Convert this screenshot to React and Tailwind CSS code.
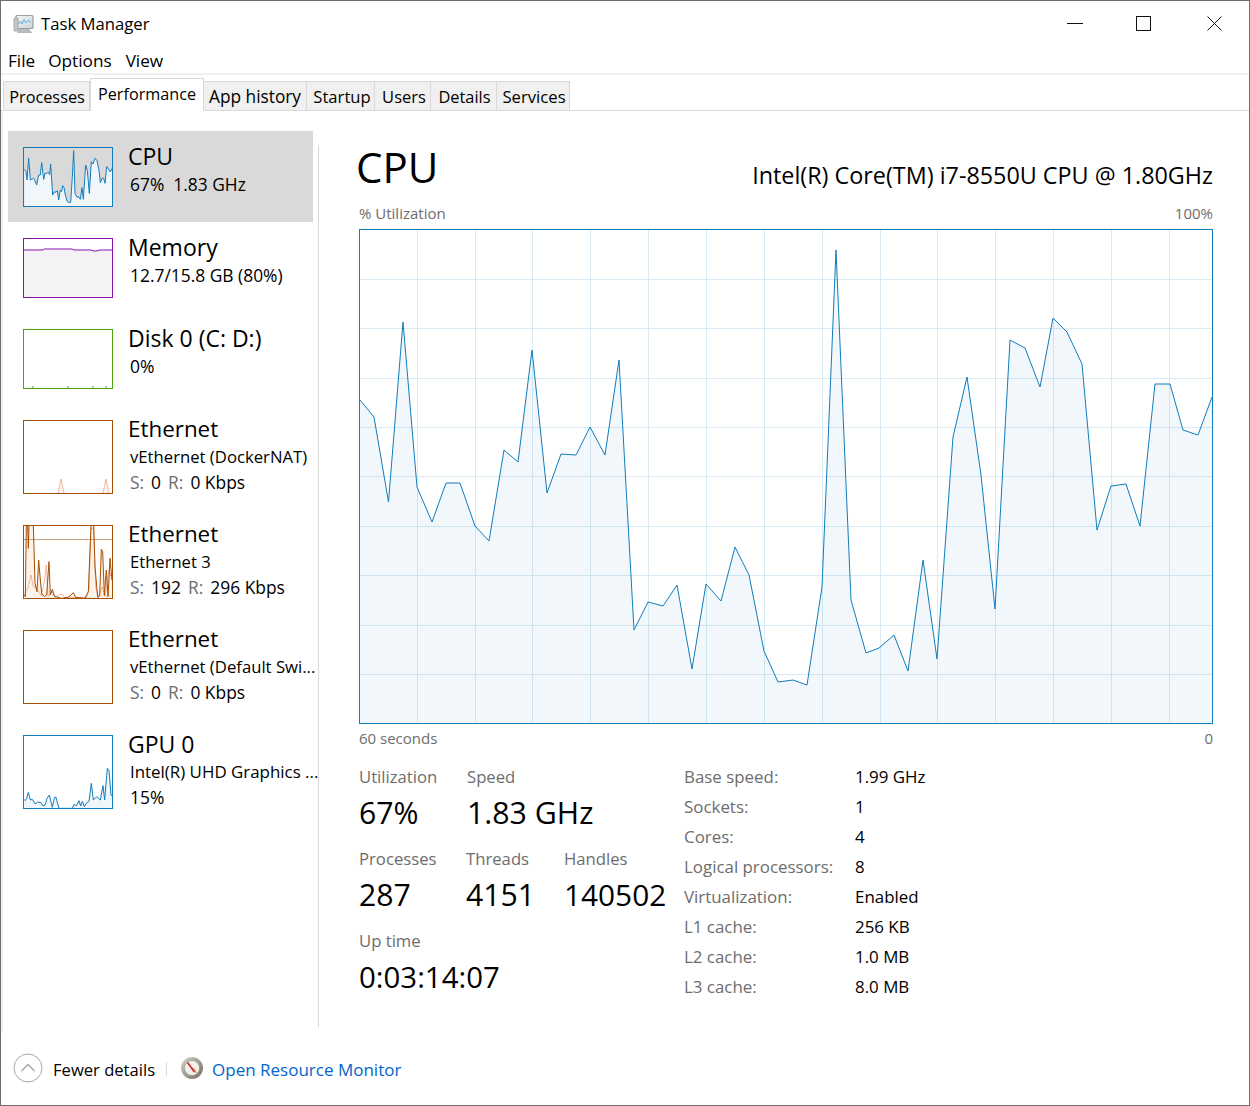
import React from "react";

const cpuPts = [[360,400],[374,417],[388.5,502],[403,322],[417,487],[432,522],[446,483],[460,483],[475,526],[489,541],[504,450],[518,462],[532,350],[547,493],[561,454],[576,455],[590,427],[605,455],[619,360],[634,630],[648,602],[663,606],[677,585],[692,669],[706,584],[721,601],[735,547],[749,575],[764,651],[778,682],[793,680],[807,685],[822,587],[836,250],[851,600],[866,653],[879,648],[894,635],[908,671],[923,560],[937,659],[953,437],[967,377],[981,475],[995,609],[1010,340],[1025,348],[1040,387],[1053,318],[1067,332],[1082,364],[1097,530],[1111,486],[1126,484],[1140,526],[1155,384],[1170,384],[1183,430],[1198,435],[1212,397]];
const hLines = [279,328,378,427,476,526,575,625,674];
const vLines = [417,475,532,590,648,706,764,822,880,937,995,1053,1111,1169];

const cpuMini = [[28,88],[33,95],[36,120],[41,55],[46,120],[55,115],[58,118],[65,135],[71,105],[76,105],[80,68],[86,118],[90,100],[96,100],[100,96],[104,104],[107,72],[113,165],[118,155],[123,157],[127,152],[131,180],[136,150],[140,155],[143,137],[147,143],[151,165],[156,183],[161,187],[167,187],[172,110],[176,32],[180,160],[186,172],[191,170],[196,178],[201,143],[205,178],[212,75],[217,92],[223,160],[229,65],[234,72],[240,55],[246,62],[252,92],[256,128],[261,115],[266,115],[270,130],[275,80],[281,88],[286,96],[291,85]];
const ethSolid = [[27,225],[31,230],[34,15],[38,15],[40,85],[42,15],[55,15],[60,190],[66,215],[71,120],[76,180],[80,220],[88,230],[95,225],[102,125],[106,225],[112,208],[118,228],[128,232],[140,235],[158,232],[165,228],[175,218],[182,232],[210,235],[220,215],[228,15],[236,15],[240,140],[248,232],[254,228],[259,88],[263,95],[268,225],[274,150],[279,230],[285,115],[291,180]];
const ethDot = [[27,225],[40,200],[48,165],[55,200],[65,205],[80,228],[90,170],[94,135],[99,230],[110,215],[120,232],[130,228],[140,220],[148,232],[215,232],[222,205],[228,30],[236,20],[242,200],[250,232],[262,200],[270,230],[282,150],[291,180]];
const gpuMini = [[27,208],[31,212],[35,205],[40,187],[46,210],[52,208],[60,222],[68,216],[78,218],[84,228],[90,225],[96,205],[103,195],[112,232],[118,204],[122,200],[132,235],[172,235],[178,222],[184,228],[192,212],[197,228],[202,214],[208,230],[214,220],[222,214],[229,160],[235,210],[245,200],[256,210],[264,167],[269,210],[277,115],[282,122],[288,195],[292,198]];

const conv = (pts, top = 24) => pts.map(([x, y]) => [x / 3 - 9, (y - top) / 3]);
const str = (pts) => pts.map((p) => p.join(",")).join(" ");
const area = (pts, h) => `${pts[0][0]},${h} ${str(pts)} ${pts[pts.length - 1][0]},${h}`;

function CpuThumb() {
  const p = conv(cpuMini);
  return (
    <svg viewBox="0 0 88 58" className="block w-full h-full">
      <polygon points={area(p, 58)} fill="#f1f6fa" />
      <polyline points={str(p)} fill="none" stroke="#117dbb" strokeWidth="1" />
    </svg>
  );
}
function MemThumb() {
  const p = [[0,11],[19,11],[20,10],[48,10],[50,11],[67,11],[70,12],[72,12],[76,11],[88,11]];
  return (
    <svg viewBox="0 0 88 58" className="block w-full h-full">
      <polygon points={area(p, 58)} fill="#f4f2f4" />
      <polyline points={str(p)} fill="none" stroke="#8b12ae" strokeWidth="1" />
    </svg>
  );
}
function DiskThumb() {
  return (
    <svg viewBox="0 0 88 58" className="block w-full h-full">
      {[9, 44, 69, 82].map((x) => (
        <line key={x} x1={x} x2={x} y1="56" y2="58" stroke="#4da60c" strokeWidth="1" />
      ))}
    </svg>
  );
}
function DockerThumb() {
  return (
    <svg viewBox="0 0 88 72" className="block w-full h-full">
      {[37, 82].map((x) => (
        <g key={x}>
          <polygon points={`${x - 3},72 ${x},58 ${x + 3},72`} fill="#fcf3eb" />
          <polyline points={`${x - 3},72 ${x},58 ${x + 3},72`} fill="none" stroke="#e8764a" strokeWidth="1" strokeDasharray="1 1" />
        </g>
      ))}
    </svg>
  );
}
function Eth3Thumb() {
  const s = conv(ethSolid, 18);
  const d = conv(ethDot, 18);
  return (
    <svg viewBox="0 0 88 72" className="block w-full h-full">
      <polygon points={area(s, 72)} fill="#fcf3eb" />
      <line x1="0" x2="88" y1="13.5" y2="13.5" stroke="#d0a47c" strokeWidth="1" />
      <polyline points={str(d)} fill="none" stroke="#e8764a" strokeWidth="1" strokeDasharray="1 1" />
      <polyline points={str(s)} fill="none" stroke="#a74f01" strokeWidth="1" />
    </svg>
  );
}
function GpuThumb() {
  const p = conv(gpuMini, 18);
  return (
    <svg viewBox="0 0 88 72" className="block w-full h-full">
      <polygon points={area(p, 72)} fill="#f1f6fa" />
      <polyline points={str(p)} fill="none" stroke="#117dbb" strokeWidth="1" />
    </svg>
  );
}

function Gray({ children }) {
  return <span className="text-[#6d6d6d]">{children}</span>;
}

function Row({ selected, tall, color, thumb, title, line2, line3, head = "text-[23px]", sub = "text-[16.9px]", third = "text-[17.4px]" }) {
  return (
    <div className={`flex pl-[15px] pt-[11px] w-[305px] ${tall ? "h-[105px]" : "h-[91px]"} ${selected ? "bg-[#d9d9d9]" : ""}`}>
      <div className={`mt-[5px] w-[90px] shrink-0 border ${color} ${tall ? "h-[74px]" : "h-[60px]"}`}>{thumb}</div>
      <div className="ml-[15px] whitespace-nowrap text-black">
        <div className={`h-[28px] leading-[28px] ${head}`}>{title}</div>
        <div className={`h-[28px] leading-[28px] ml-[2px] ${sub}`}>{line2}</div>
        {line3 && <div className={`h-[25px] leading-[22px] ml-[2px] ${third}`}>{line3}</div>}
      </div>
    </div>
  );
}

function Rate({ s, r }) {
  return (
    <>
      <Gray>S:</Gray>
      <span className="ml-[7px]">{s}</span>
      <Gray>
        <span className="ml-[7px]">R:</span>
      </Gray>
      <span className="ml-[7px]">{r} Kbps</span>
    </>
  );
}

function Stat({ label, value, className = "", size = "text-[30.2px]" }) {
  return (
    <div className={`h-[82px] whitespace-nowrap ${className}`}>
      <div className="h-[24px] leading-[24px] text-[16.7px] text-[#6d6d6d]">{label}</div>
      <div className={`h-[48px] leading-[48px] text-black ${size}`}>{value}</div>
    </div>
  );
}

const specs = [
  ["Base speed:", "1.99 GHz"],
  ["Sockets:", "1"],
  ["Cores:", "4"],
  ["Logical processors:", "8"],
  ["Virtualization:", "Enabled"],
  ["L1 cache:", "256 KB"],
  ["L2 cache:", "1.0 MB"],
  ["L3 cache:", "8.0 MB"],
];

const tabs = [
  ["Processes", "w-[87px] text-[16.3px] pl-[1px]"],
  ["Performance", "w-[114px] text-[16.2px]", true],
  ["App history", "w-[103px] text-[17.3px]"],
  ["Startup", "w-[68px] text-[16.6px] pl-[3px]"],
  ["Users", "w-[56px] text-[16.5px] pl-[3px]"],
  ["Details", "w-[66px] text-[16.4px] pl-[2px]"],
  ["Services", "w-[73px] text-[16.7px] pl-[2px]"],
];

export default function App() {
  return (
    <div className="w-[1250px] h-[1106px] flex flex-col border border-[#6e6e6e] bg-white text-black font-['Open_Sans',sans-serif] overflow-hidden">
      {/* title bar */}
      <div className="h-[47px] shrink-0 flex items-center">
        <svg viewBox="0 0 22 22" className="ml-[12px] w-[22px] h-[22px] -mt-[1px]">
          <defs>
            <linearGradient id="tm" x1="0" y1="0" x2="1" y2="1">
              <stop offset="0" stopColor="#f4f7f9" />
              <stop offset="1" stopColor="#c9d3da" />
            </linearGradient>
          </defs>
          <path d="M6 16.5h10l2.5 3H4.5z" fill="#b9bcbf" stroke="#8e9194" strokeWidth="0.5" />
          <rect x="3" y="2.5" width="17" height="13" rx="1" fill="url(#tm)" stroke="#9a9fa3" strokeWidth="1.2" />
          <rect x="1" y="5" width="4" height="13" rx="0.8" fill="#c4c7c9" stroke="#909497" strokeWidth="0.7" />
          <polyline points="5.5,11 7.5,8 9,11 11,6.5 13,10 15,7.5 18,9" fill="none" stroke="#6aaede" strokeWidth="1" />
        </svg>
        <span className="ml-[6px] text-[16.7px] -mt-[2px]">Task Manager</span>
        <div className="ml-auto flex items-center h-full">
          <svg viewBox="0 0 16 15" className="w-[16px] h-[15px] mr-[53px] -mt-[3px]">
            <line x1="0" x2="16" y1="7.5" y2="7.5" stroke="#111" strokeWidth="1" />
          </svg>
          <svg viewBox="0 0 15 15" className="w-[15px] h-[15px] mr-[56px] -mt-[3px]">
            <rect x="0.5" y="0.5" width="14" height="14" fill="none" stroke="#111" strokeWidth="1" />
          </svg>
          <svg viewBox="0 0 15 15" className="w-[15px] h-[15px] mr-[27px] -mt-[3px]">
            <path d="M0.5 0.5L14.5 14.5M14.5 0.5L0.5 14.5" stroke="#111" strokeWidth="1" />
          </svg>
        </div>
      </div>

      {/* menu */}
      <div className="h-[27px] shrink-0 border-b-2 border-[#f0f0f0] flex items-center pl-[7px] text-[17.2px]">
        <span>File</span>
        <span className="ml-[13px]">Options</span>
        <span className="ml-[14px]">View</span>
      </div>

      {/* tabs */}
      <div className="h-[36px] shrink-0 flex items-end pl-[2px] border-b border-[#d9d9d9]">
        {tabs.map(([name, w, sel]) =>
          sel ? (
            <div key={name} className={`${w} h-[33px] -mb-px bg-white border border-b-0 border-[#d9d9d9] flex items-center justify-center pb-[1px]`}>
              {name}
            </div>
          ) : (
            <div key={name} className={`${w} h-[29px] bg-[#f0f0f0] border border-b-0 border-l-0 first:border-l border-[#d9d9d9] flex items-center justify-center pt-[2px]`}>
              {name}
            </div>
          )
        )}
      </div>

      {/* body */}
      <div className="flex-1 min-h-0 flex border-l-2 border-[#f0f0f0]">
        <div className="w-[315px] shrink-0 pl-[5px] pt-[20px]">
          <Row selected color="border-[#117dbb]" thumb={<CpuThumb />} title="CPU" sub="text-[17.4px]" line2={<>67%&nbsp;&nbsp;1.83 GHz</>} />
          <Row color="border-[#8b12ae]" thumb={<MemThumb />} title="Memory" sub="text-[17.4px]" line2="12.7/15.8 GB (80%)" />
          <Row color="border-[#4da60c]" thumb={<DiskThumb />} title="Disk 0 (C: D:)" sub="text-[17.5px]" line2="0%" />
          <Row tall color="border-[#a74f01]" thumb={<DockerThumb />} head="text-[22.4px]" title="Ethernet" sub="text-[16.7px]" line2="vEthernet (DockerNAT)" line3={<Rate s="0" r="0" />} />
          <Row tall color="border-[#a74f01]" thumb={<Eth3Thumb />} head="text-[22.4px]" title="Ethernet" sub="text-[16.6px]" line2="Ethernet 3" line3={<Rate s="192" r="296" />} />
          <Row tall color="border-[#a74f01]" head="text-[22.4px]" title="Ethernet" sub="text-[16.7px]" line2="vEthernet (Default Swi..." line3={<Rate s="0" r="0" />} />
          <Row tall color="border-[#117dbb]" thumb={<GpuThumb />} title="GPU 0" line2="Intel(R) UHD Graphics ..." line3="15%" />
        </div>
        <div className="w-px shrink-0 mt-[34px] mb-[5px] bg-[#d9d9d9]" />

        <div className="w-[856px] ml-[38px] pt-[29px]">
          <div className="flex justify-between items-start h-[61px]">
            <div className="h-[54px] leading-[54px] text-[42px] -ml-[1px]">CPU</div>
            <div className="h-[28px] leading-[28px] mt-[21px] text-[23.35px]">Intel(R) Core(TM) i7-8550U CPU @ 1.80GHz</div>
          </div>
          <div className="flex justify-between h-[24px] leading-[24px] text-[15px] text-[#6d6d6d] pl-[2px]">
            <span>% Utilization</span>
            <span>100%</span>
          </div>
          <div className="ml-[2px] mt-[4px] w-[854px] h-[495px] border border-[#117dbb]">
            <svg viewBox="360 230 852 493" className="block w-[852px] h-[493px]">
              {hLines.map((y) => (
                <line key={y} x1="360" x2="1212" y1={y + 0.5} y2={y + 0.5} stroke="#d9eaf4" strokeWidth="1" />
              ))}
              {vLines.map((x) => (
                <line key={x} x1={x + 0.5} x2={x + 0.5} y1="230" y2="723" stroke="#d9eaf4" strokeWidth="1" />
              ))}
              <polygon points={area(cpuPts, 723)} fill="#117dbb" fillOpacity="0.06" />
              <polyline points={str(cpuPts)} fill="none" stroke="#117dbb" strokeWidth="1" />
            </svg>
          </div>
          <div className="flex justify-between h-[24px] leading-[24px] mt-[2px] text-[15px] text-[#6d6d6d] pl-[2px]">
            <span>60 seconds</span>
            <span>0</span>
          </div>

          <div className="flex mt-[15px] pl-[2px]">
            <div className="w-[325px] shrink-0">
              <div className="flex">
                <Stat label="Utilization" value="67%" className="w-[108px]" />
                <Stat label="Speed" value="1.83 GHz" size="text-[30.3px]" />
              </div>
              <div className="flex">
                <Stat label="Processes" value="287" className="w-[107px]" />
                <Stat label="Threads" value="4151" className="w-[98px]" />
                <Stat label="Handles" value="140502" size="text-[29.8px]" />
              </div>
              <Stat label="Up time" value="0:03:14:07" size="text-[29.4px]" />
            </div>
            <div className="grid grid-cols-[171px_auto] auto-rows-[30px] leading-[24px] text-[16.9px]">
              {specs.map(([k, v]) => (
                <React.Fragment key={k}>
                  <span className="text-[#6d6d6d] whitespace-nowrap">{k}</span>
                  <span className="text-black">{v}</span>
                </React.Fragment>
              ))}
            </div>
          </div>
        </div>
      </div>

      {/* footer */}
      <div className="h-[73px] shrink-0 flex items-center pl-[12px] pt-[3px]">
        <svg viewBox="0 0 30 30" className="w-[30px] h-[30px] -mt-[4px]">
          <circle cx="15" cy="15" r="14" fill="#fff" stroke="#a6a6a6" strokeWidth="1" />
          <path d="M8.5 18L15 11.5L21.5 18" fill="none" stroke="#a6a6a6" strokeWidth="1.4" />
        </svg>
        <span className="ml-[10px] text-[16.6px]">Fewer details</span>
        <div className="ml-[11px] w-px h-[14px] bg-[#d9d9d9] -mt-[3px]" />
        <svg viewBox="0 0 24 24" className="ml-[13px] w-[24px] h-[24px] -mt-[5px]">
          <defs>
            <linearGradient id="rim" x1="0" y1="0" x2="1" y2="1">
              <stop offset="0" stopColor="#d9d6d0" />
              <stop offset="1" stopColor="#6e6a64" />
            </linearGradient>
          </defs>
          <circle cx="12" cy="12" r="11" fill="url(#rim)" />
          <circle cx="12" cy="12" r="7.5" fill="#f3f0ea" stroke="#8a8680" strokeWidth="0.5" />
          <path d="M12.5 12 A6 6 0 0 1 16 17" fill="none" stroke="#e59a5c" strokeWidth="1.2" />
          <line x1="7.5" y1="6.5" x2="14.5" y2="16" stroke="#c8262a" strokeWidth="1.6" />
        </svg>
        <span className="ml-[8px] text-[17px] text-[#0066cc]">Open Resource Monitor</span>
      </div>
    </div>
  );
}
